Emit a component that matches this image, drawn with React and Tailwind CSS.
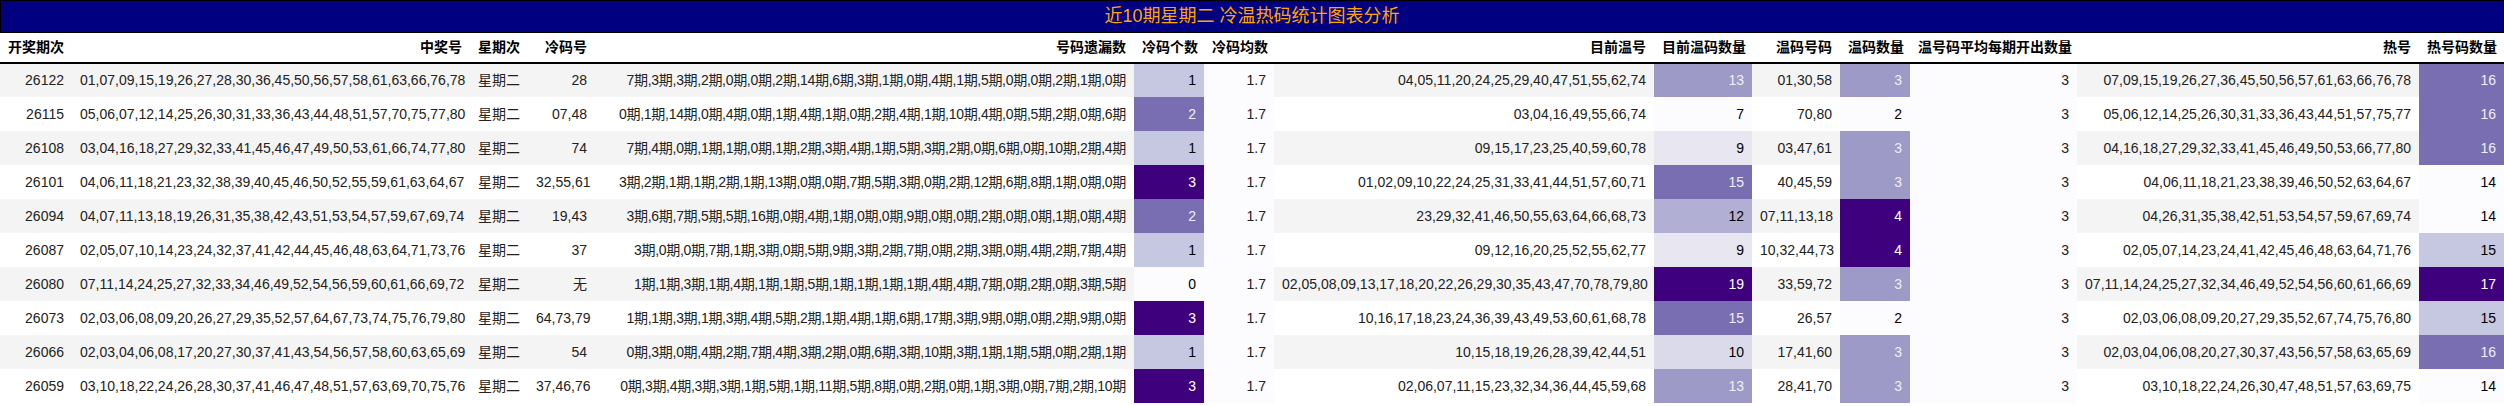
const rows = [
  ["26122","01,07,09,15,19,26,27,28,30,36,45,50,56,57,58,61,63,66,76,78","28","7期,3期,3期,2期,0期,0期,2期,14期,6期,3期,1期,0期,4期,1期,5期,0期,0期,2期,1期,0期",1,"04,05,11,20,24,25,29,40,47,51,55,62,74",13,"01,30,58",3,"07,09,15,19,26,27,36,45,50,56,57,61,63,66,76,78",16],
  ["26115","05,06,07,12,14,25,26,30,31,33,36,43,44,48,51,57,70,75,77,80","07,48","0期,1期,14期,0期,4期,0期,1期,4期,1期,0期,2期,4期,1期,10期,4期,0期,5期,2期,0期,6期",2,"03,04,16,49,55,66,74",7,"70,80",2,"05,06,12,14,25,26,30,31,33,36,43,44,51,57,75,77",16],
  ["26108","03,04,16,18,27,29,32,33,41,45,46,47,49,50,53,61,66,74,77,80","74","7期,4期,0期,1期,1期,0期,1期,2期,3期,4期,1期,5期,3期,2期,0期,6期,0期,10期,2期,4期",1,"09,15,17,23,25,40,59,60,78",9,"03,47,61",3,"04,16,18,27,29,32,33,41,45,46,49,50,53,66,77,80",16],
  ["26101","04,06,11,18,21,23,32,38,39,40,45,46,50,52,55,59,61,63,64,67","32,55,61","3期,2期,1期,1期,2期,1期,13期,0期,0期,7期,5期,3期,0期,2期,12期,6期,8期,1期,0期,0期",3,"01,02,09,10,22,24,25,31,33,41,44,51,57,60,71",15,"40,45,59",3,"04,06,11,18,21,23,38,39,46,50,52,63,64,67",14],
  ["26094","04,07,11,13,18,19,26,31,35,38,42,43,51,53,54,57,59,67,69,74","19,43","3期,6期,7期,5期,5期,16期,0期,4期,1期,0期,0期,9期,0期,0期,2期,0期,0期,1期,0期,4期",2,"23,29,32,41,46,50,55,63,64,66,68,73",12,"07,11,13,18",4,"04,26,31,35,38,42,51,53,54,57,59,67,69,74",14],
  ["26087","02,05,07,10,14,23,24,32,37,41,42,44,45,46,48,63,64,71,73,76","37","3期,0期,0期,7期,1期,3期,0期,5期,9期,3期,2期,7期,0期,2期,3期,0期,4期,2期,7期,4期",1,"09,12,16,20,25,52,55,62,77",9,"10,32,44,73",4,"02,05,07,14,23,24,41,42,45,46,48,63,64,71,76",15],
  ["26080","07,11,14,24,25,27,32,33,34,46,49,52,54,56,59,60,61,66,69,72","无","1期,1期,3期,1期,4期,1期,1期,5期,1期,1期,1期,1期,4期,4期,7期,0期,2期,0期,3期,5期",0,"02,05,08,09,13,17,18,20,22,26,29,30,35,43,47,70,78,79,80",19,"33,59,72",3,"07,11,14,24,25,27,32,34,46,49,52,54,56,60,61,66,69",17],
  ["26073","02,03,06,08,09,20,26,27,29,35,52,57,64,67,73,74,75,76,79,80","64,73,79","1期,1期,3期,1期,3期,4期,5期,2期,1期,4期,1期,6期,17期,3期,9期,0期,0期,2期,9期,0期",3,"10,16,17,18,23,24,36,39,43,49,53,60,61,68,78",15,"26,57",2,"02,03,06,08,09,20,27,29,35,52,67,74,75,76,80",15],
  ["26066","02,03,04,06,08,17,20,27,30,37,41,43,54,56,57,58,60,63,65,69","54","0期,3期,0期,4期,2期,7期,4期,3期,2期,0期,6期,3期,10期,3期,1期,1期,5期,0期,2期,1期",1,"10,15,18,19,26,28,39,42,44,51",10,"17,41,60",3,"02,03,04,06,08,20,27,30,37,43,56,57,58,63,65,69",16],
  ["26059","03,10,18,22,24,26,28,30,37,41,46,47,48,51,57,63,69,70,75,76","37,46,76","0期,3期,4期,3期,3期,1期,5期,1期,11期,5期,8期,0期,2期,0期,1期,3期,0期,7期,2期,10期",3,"02,06,07,11,15,23,32,34,36,44,45,59,68",13,"28,41,70",3,"03,10,18,22,24,26,30,47,48,51,57,63,69,75",14],
];

const coldC = { 0: "bg-[#fcfbfd] text-black", 1: "bg-[#c6c7e1] text-black", 2: "bg-[#7a6eb2] text-[#eeeef6]", 3: "bg-[#3f007d] text-white" };
const warmNC = { 7: "bg-[#fcfbfd] text-black", 9: "bg-[#e7e6f1] text-black", 10: "bg-[#dadaeb] text-black", 12: "bg-[#b1b0d4] text-black", 13: "bg-[#9e9ac8] text-[#eeeef6]", 15: "bg-[#7a6eb2] text-[#eeeef6]", 19: "bg-[#3f007d] text-white" };
const warmC = { 2: "bg-[#fcfbfd] text-black", 3: "bg-[#9e9ac8] text-[#eeeef6]", 4: "bg-[#3f007d] text-white" };
const hotC = { 14: "bg-[#fcfbfd] text-black", 15: "bg-[#c6c7e1] text-black", 16: "bg-[#7a6eb2] text-[#eeeef6]", 17: "bg-[#3f007d] text-white" };

const widths = [72, 398, 58, 67, 539, 70, 70, 380, 98, 88, 70, 167, 342, 85];
const heads = ["开奖期次","中奖号","星期次","冷码号","号码遗漏数","冷码个数","冷码均数","目前温号","目前温码数量","温码号码","温码数量","温号码平均每期开出数量","热号","热号码数量"];

export default function App() {
  const td = "h-[34px] px-2 text-right whitespace-nowrap overflow-hidden";
  return (
    <div className="w-[2504px] bg-white text-[14px] text-[#222]" style={{ fontFamily: '"Liberation Sans", "Noto Sans CJK SC", sans-serif' }}>
      <div className="h-[33px] bg-[#000080] border border-black flex items-center justify-center text-[18px] text-[#ffa500]">近10期星期二 冷温热码统计图表分析</div>
      <table className="table-fixed w-full border-collapse">
        <colgroup>{widths.map((w, i) => <col key={i} style={{ width: w }} />)}</colgroup>
        <thead>
          <tr className="border-b-2 border-black">
            {heads.map((h, i) => (
              <th key={i} className={`h-[30px] px-2 font-bold text-black whitespace-nowrap ${i === 0 ? "text-left" : "text-right"}`}>{h}</th>
            ))}
          </tr>
        </thead>
        <tbody>
          {rows.map((r, i) => (
            <tr key={i} className={i % 2 === 0 ? "bg-[#f4f4f4]" : "bg-white"}>
              <td className={td}>{r[0]}</td>
              <td className={td}>{r[1]}</td>
              <td className={td}>星期二</td>
              <td className={td}>{r[2]}</td>
              <td className={`${td} tracking-[-0.3px]`}>{r[3]}</td>
              <td className={`${td} ${coldC[r[4]]}`}>{r[4]}</td>
              <td className={`${td} bg-[#fcfbfd]`}>1.7</td>
              <td className={td}>{r[5]}</td>
              <td className={`${td} ${warmNC[r[6]]}`}>{r[6]}</td>
              <td className={td}>{r[7]}</td>
              <td className={`${td} ${warmC[r[8]]}`}>{r[8]}</td>
              <td className={`${td} bg-[#fcfbfd]`}>3</td>
              <td className={td}>{r[9]}</td>
              <td className={`${td} ${hotC[r[10]]}`}>{r[10]}</td>
            </tr>
          ))}
        </tbody>
      </table>
    </div>
  );
}
